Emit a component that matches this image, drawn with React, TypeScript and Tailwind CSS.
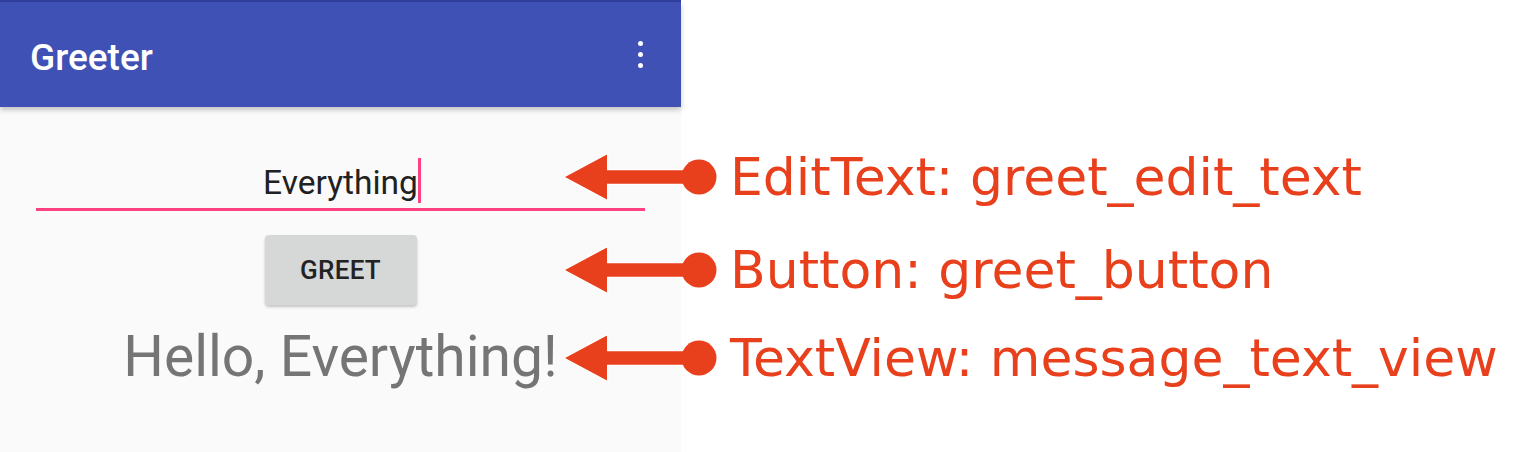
import React from "react";

const callouts = [
  { top: "top-[152px]", label: "EditText: greet_edit_text" },
  { top: "top-[245px]", label: "Button: greet_button" },
  { top: "top-[333px]", label: "TextView: message_text_view" },
];

function Pointer() {
  return (
    <svg width="155" height="50" viewBox="0 0 155 50" className="shrink-0">
      <path
        d="M3 25 L45 2.5 L45 18.5 L138 18.5 L138 31.5 L45 31.5 L45 47.5 Z"
        fill="#e8401c"
        stroke="#ffffff"
        strokeWidth="3"
        strokeLinejoin="miter"
        paintOrder="stroke"
      />
      <rect x="44" y="18.5" width="96" height="13" fill="#e8401c" />
      <circle cx="137" cy="25" r="17.5" fill="#e8401c" />
    </svg>
  );
}

function PhoneScreen() {
  return (
    <div className="flex h-[452px] w-[681px] shrink-0 flex-col bg-[#fafafa] font-['Roboto',sans-serif]">
      <div className="h-[2px] bg-[#303f9f]" />
      <div className="relative z-10 flex h-[105px] items-center justify-between bg-[#3f51b5] pl-[30px] pr-[38px] shadow-[0_3px_5px_rgba(0,0,0,0.22)]">
        <span className="mt-[6px] text-[37px] font-medium leading-none text-white">Greeter</span>
        <div className="flex flex-col gap-[6px]">
          <span className="block h-[5px] w-[5px] rounded-full bg-white" />
          <span className="block h-[5px] w-[5px] rounded-full bg-white" />
          <span className="block h-[5px] w-[5px] rounded-full bg-white" />
        </div>
      </div>

      <div className="mx-[36px] mt-[51px] flex flex-col">
        <div className="flex h-[45px] items-start justify-center pl-[3px]">
          <span className="mt-[8px] text-[33.5px] leading-none text-[#212121]">Everything</span>
          <span className="block h-[45px] w-[3px] bg-[#ff4081]" />
        </div>
        <div className="mt-[5px] h-[3px] bg-[#ff4081]" />
      </div>

      <button
        type="button"
        className="mx-auto mt-[24px] flex h-[70px] w-[152px] items-center justify-center rounded-[4px] bg-[#d6d7d7] text-[26px] font-medium leading-none tracking-[0.3px] text-[#222222] shadow-[0_2px_3px_rgba(0,0,0,0.22)]"
      >
        GREET
      </button>

      <p className="mt-[23px] text-center text-[57px] leading-none text-[#757575]">Hello, Everything!</p>
    </div>
  );
}

export default function App() {
  return (
    <div className="relative flex h-[452px] w-[1526px] overflow-hidden bg-white">
      <PhoneScreen />
      <div className="flex-1 bg-white" />
      {callouts.map((c) => (
        <div key={c.label} className={`absolute left-[562px] ${c.top} flex items-center`}>
          <Pointer />
          <span className="ml-[13px] whitespace-nowrap font-['DejaVu_Sans',sans-serif] text-[52px] leading-[50px] text-[#e8401c]">
            {c.label}
          </span>
        </div>
      ))}
    </div>
  );
}
